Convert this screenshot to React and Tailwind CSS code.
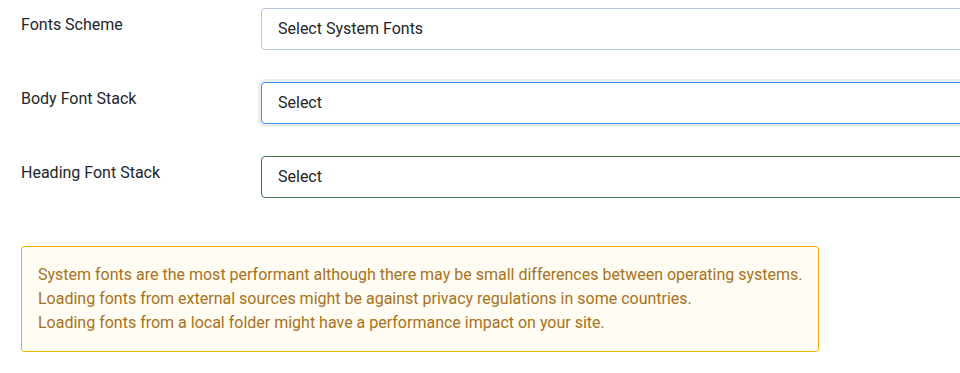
export default function App() {
  const rows = [
    { label: "Fonts Scheme", value: "Select System Fonts", border: "border-[#b8c8dc]", ring: "" },
    { label: "Body Font Stack", value: "Select", border: "border-[#3c92f5]", ring: "shadow-[0_0_0_3px_#ececec]" },
    { label: "Heading Font Stack", value: "Select", border: "border-[#457a50]", ring: "" },
  ];

  return (
    <div className="w-[960px] h-[373px] overflow-hidden bg-white font-['Roboto',sans-serif] text-[#22262a]">
      <div className="pl-[21px] pt-[8px] flex flex-col gap-[32px]">
        {rows.map((r, idx) => (
          <div key={idx} className="flex items-start">
            <div className="w-[240px] shrink-0 pt-[5px] text-[16px] leading-[24px]">{r.label}</div>
            <div
              className={`w-[720px] h-[42px] shrink-0 border ${r.border} ${r.ring} rounded-[4px] flex items-center pl-[16px] text-[16px]`}
            >
              {r.value}
            </div>
          </div>
        ))}
      </div>

      <div className="ml-[21px] mt-[48px] w-[798px] h-[106px] border border-[#f3b500] bg-[#fffcf4] rounded-[3px] pl-[16px] pt-[16px] text-[16px] leading-[24px] text-[#a8721a] whitespace-nowrap">
        <div>System fonts are the most performant although there may be small differences between operating systems.</div>
        <div>Loading fonts from external sources might be against privacy regulations in some countries.</div>
        <div>Loading fonts from a local folder might have a performance impact on your site.</div>
      </div>
    </div>
  );
}
